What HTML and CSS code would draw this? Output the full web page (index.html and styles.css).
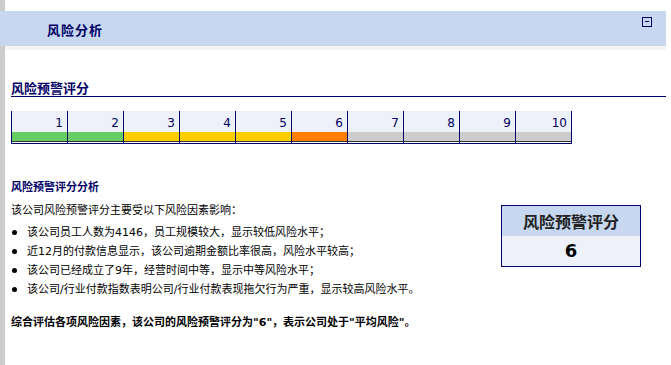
FILE: index.html
```html
<!DOCTYPE html>
<html lang="zh-CN">
<head>
    <meta charset="UTF-8">
    <title>风险分析</title>
    <link rel="stylesheet" href="styles.css">
</head>
<body>
    <div class="page">
        <div class="panel-head">
            <span class="panel-title">风险分析</span>
            <span class="toggle"></span>
        </div>
        <div class="panel-strip"></div>

        <div class="content">
            <h2 class="section-title">风险预警评分</h2>

            <div class="scale">
                <div class="cell green"><span>1</span></div>
                <div class="cell green"><span>2</span></div>
                <div class="cell yellow"><span>3</span></div>
                <div class="cell yellow"><span>4</span></div>
                <div class="cell yellow"><span>5</span></div>
                <div class="cell orange"><span>6</span></div>
                <div class="cell grey"><span>7</span></div>
                <div class="cell grey"><span>8</span></div>
                <div class="cell grey"><span>9</span></div>
                <div class="cell grey"><span>10</span></div>
            </div>

            <h3 class="sub-title">风险预警评分分析</h3>

            <div class="analysis">
                <div class="analysis-text">
                    <p class="intro">该公司风险预警评分主要受以下风险因素影响：</p>
                    <ul class="factors">
                        <li>该公司员工人数为4146，员工规模较大，显示较低风险水平；</li>
                        <li>近12月的付款信息显示，该公司逾期金额比率很高，风险水平较高；</li>
                        <li>该公司已经成立了9年，经营时间中等，显示中等风险水平；</li>
                        <li>该公司/行业付款指数表明公司/行业付款表现拖欠行为严重，显示较高风险水平。</li>
                    </ul>
                    <p class="summary">综合评估各项风险因素，该公司的风险预警评分为"6"，表示公司处于"平均风险"。</p>
                </div>
                <div class="score-box">
                    <div class="score-head">风险预警评分</div>
                    <div class="score-value">6</div>
                </div>
            </div>
        </div>
    </div>
</body>
</html>
```

FILE: styles.css
```css
body {
    margin: 0;
    padding: 0;
    background-color: #ffffff;
    font-family: "DejaVu Sans", "Noto Sans CJK SC", sans-serif;
    font-size: 11px;
    color: #000;
}
.page {
    width: 666px;
    min-height: 365px;
    border-left: 5px solid #cccccc;
    padding-top: 11px;
    box-sizing: border-box;
}
.panel-head {
    height: 35px;
    background-color: #c6d7ef;
    display: flex;
    justify-content: space-between;
    align-items: center;
    margin-left: -5px;
    padding-left: 47px;
    padding-right: 14px;
}
.panel-title {
    font-family: "Noto Sans CJK SC", sans-serif;
    font-size: 13px;
    font-weight: bold;
    letter-spacing: 1px;
    color: #000066;
    margin-top: 2px;
}
.toggle {
    align-self: flex-start;
    margin-top: 6px;
    width: 8px;
    height: 8px;
    border: 1px solid #000066;
    position: relative;
}
.toggle::after {
    content: "";
    position: absolute;
    left: 2px;
    top: 3px;
    width: 4px;
    height: 1px;
    background-color: #000066;
}
.panel-strip {
    height: 4px;
    background-color: #f4f4f4;
}
.content {
    padding-left: 6px;
}
.section-title {
    margin: 29px 0 0 0;
    font-family: "Noto Sans CJK SC", sans-serif;
    font-size: 13px;
    line-height: 17px;
    font-weight: bold;
    color: #000066;
    border-bottom: 1px solid #000066;
}
.scale {
    display: flex;
    margin-top: 14px;
    width: 560px;
    border-right: 1px solid #000066;
    border-bottom: 1px solid #000066;
}
.cell {
    width: 56px;
    box-sizing: border-box;
    border-left: 1px solid #000066;
    padding-bottom: 1px;
}
.cell span {
    display: block;
    height: 21px;
    box-sizing: border-box;
    padding: 4px 4px 0 0;
    line-height: 17px;
    text-align: right;
    font-size: 12px;
    color: #000066;
    background-color: #eef1f7;
}
.cell::after {
    content: "";
    display: block;
    height: 9px;
    border-bottom: 1px solid #333333;
}
.green::after { background-color: #66cc66; }
.yellow::after { background-color: #ffcc00; }
.orange::after { background-color: #ff8000; }
.grey::after { background-color: #cccccc; }
.sub-title {
    margin: 35px 0 0 0;
    font-family: "Noto Sans CJK SC", sans-serif;
    font-size: 11px;
    line-height: 15px;
    font-weight: bold;
    color: #000066;
}
.analysis {
    display: flex;
    justify-content: space-between;
    align-items: flex-start;
    margin-top: 8px;
}
.intro {
    margin: 0;
    line-height: 18px;
}
.factors {
    list-style: none;
    margin: 3px 0 0 0;
    padding: 0;
}
.factors li {
    line-height: 19px;
    padding-left: 16px;
    position: relative;
}
.factors li::before {
    content: "";
    position: absolute;
    left: 1px;
    top: 7px;
    width: 5px;
    height: 5px;
    border-radius: 50%;
    background-color: #000;
}
.summary {
    margin: 15px 0 0 0;
    line-height: 18px;
    font-weight: bold;
}
.score-box {
    margin-top: 3px;
    margin-right: 25px;
    width: 140px;
    border: 1px solid #000066;
    box-sizing: border-box;
    text-align: center;
}
.score-head {
    height: 30px;
    line-height: 30px;
    background-color: #c6d7ef;
    font-family: "Noto Sans CJK SC", sans-serif;
    font-size: 16px;
    font-weight: bold;
    color: #222;
}
.score-value {
    height: 30px;
    line-height: 30px;
    background-color: #eef1f7;
    font-size: 18px;
    font-weight: bold;
}
```
